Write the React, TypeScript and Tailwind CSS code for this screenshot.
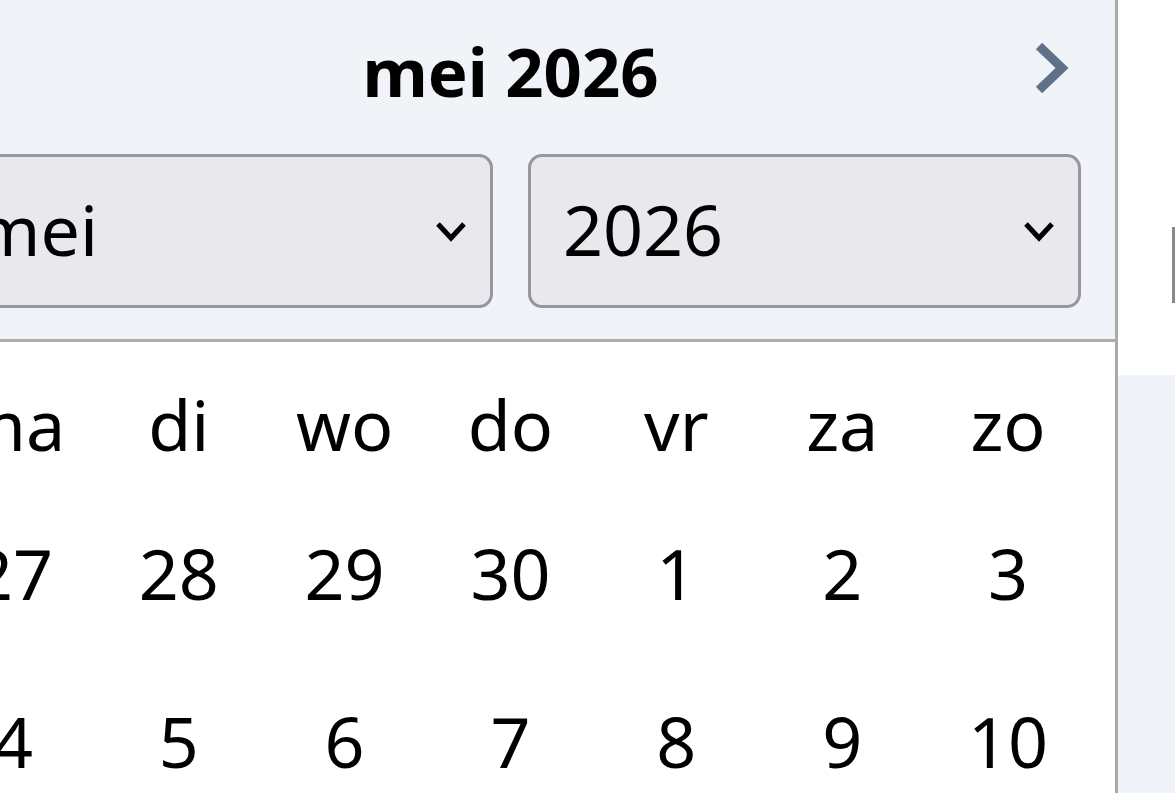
import React from 'react';

const weekdays = ['ma', 'di', 'wo', 'do', 'vr', 'za', 'zo'];
const weeks = [
  [27, 28, 29, 30, 1, 2, 3],
  [4, 5, 6, 7, 8, 9, 10],
];

function SelectBox({ value }: { value: string }) {
  return (
    <div className="flex-1 h-[154px] flex items-center justify-between pl-[32px] pr-[23px] bg-[#e9e8ed] border-[3px] border-[#9895a2] rounded-[14px]">
      <span className="text-[70px] leading-[70px] text-black pb-[4px]">{value}</span>
      <svg width="32" height="22" viewBox="0 0 32 22" fill="none">
        <path d="M3 4 L16 18 L29 4" stroke="#000" strokeWidth="5" />
      </svg>
    </div>
  );
}

export default function App() {
  return (
    <div
      className="w-full h-[793px] overflow-hidden flex bg-white"
      style={{ fontFamily: '"Noto Sans", "Open Sans", sans-serif' }}
    >
      {/* date picker popup */}
      <div className="ml-[-94px] w-[1212px] shrink-0 flex flex-col bg-white border-r-[3px] border-[#aaaaaa]">
        <div className="bg-[#f0f3f8] px-[34px] pb-[31px] border-b-[3px] border-[#acacac]">
          <div className="relative h-[142px] mb-[12px] flex items-center justify-center">
            <span className="text-[67px] leading-[70px] font-bold text-black">mei 2026</span>
            <button className="absolute right-[12px] top-[43px]" aria-label="Volgende maand">
              <svg width="34" height="50" viewBox="0 0 34 50" fill="none">
                <path d="M4 3 L27 25 L4 47" stroke="#5f7189" strokeWidth="9" />
              </svg>
            </button>
          </div>
          <div className="flex gap-[35px]">
            <SelectBox value="mei" />
            <SelectBox value="2026" />
          </div>
        </div>

        <div className="px-[24px]">
          <div className="grid grid-cols-7 pt-[47px] pb-[30px]">
            {weekdays.map((d) => (
              <div key={d} className="text-center text-[70px] leading-[70px] text-black">
                {d}
              </div>
            ))}
          </div>
          {weeks.map((week, i) => (
            <div key={i} className="grid grid-cols-7">
              {week.map((n) => (
                <div
                  key={n}
                  className="h-[168px] flex items-center justify-center text-[70px] leading-[70px] text-black"
                >
                  {n}
                </div>
              ))}
            </div>
          ))}
        </div>
      </div>

      {/* page behind the popup */}
      <div className="flex-1 flex flex-col">
        <div className="h-[375px] bg-white pt-[227px] pl-[54px]">
          <div className="w-[3px] h-[76px] bg-[#8a8a8a]" />
        </div>
        <div className="flex-1 bg-[#f0f4f9]" />
      </div>
    </div>
  );
}
